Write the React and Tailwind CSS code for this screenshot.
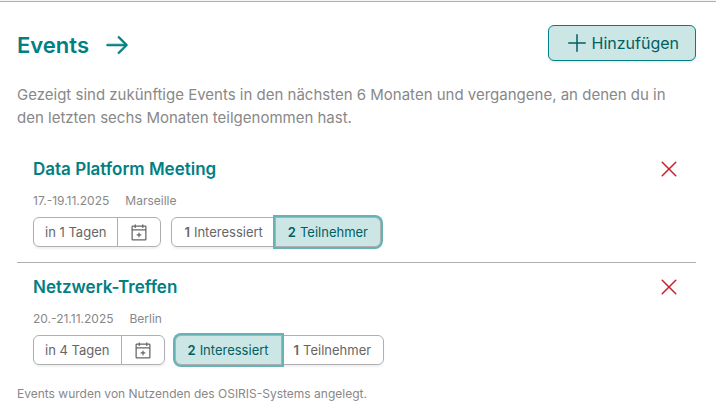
import { useState } from 'react';
import clsx from 'clsx';
import { PiArrowRight, PiCalendarPlus, PiPlus, PiX } from 'react-icons/pi';

const initialEvents = [
    { id: 1, title: 'Data Platform Meeting', date: '17.-19.11.2025', place: 'Marseille', due: 'in 1 Tagen', interested: 1, attending: 2, status: 'attending' },
    { id: 2, title: 'Netzwerk-Treffen', date: '20.-21.11.2025', place: 'Berlin', due: 'in 4 Tagen', interested: 2, attending: 1, status: 'interested' },
];

const groupCls = 'flex h-[30px] rounded-md shadow-[0_2px_2px_rgba(0,0,0,0.06)]';
const btnCls = 'flex items-center border border-[#afafaf] pt-px cursor-pointer';
const activeCls = 'relative border-[#008083] bg-[#cce6e6] text-[#005f61] ring-2 ring-[#66b3b5]';

function EventItem({ event, onStatus, onRemove }) {
    return (
        <li className="flex items-start justify-between border-b border-[#afafaf] pt-3 pr-[15px] pb-[15px] pl-4 last:border-b-0">
            <div>
                <h3 className="text-[17px] leading-6 font-semibold text-[#008083]">
                    <a href={`#event-${event.id}`}>{event.title}</a>
                </h3>
                <div className="mt-2.5 flex gap-4 text-xs leading-5">
                    <span>{event.date}</span>
                    <span>{event.place}</span>
                </div>
                <div className="mt-1.5 flex gap-2.5 text-[13px] text-[#666]">
                    <div className={groupCls}>
                        <span className="flex items-center rounded-l-md border border-[#afafaf] px-[11px] pt-px">{event.due}</span>
                        <button type="button" aria-label="Zum Kalender hinzufügen" className={clsx(btnCls, '-ml-px rounded-r-md px-[11px]')}>
                            <PiCalendarPlus className="size-5" />
                        </button>
                    </div>
                    <div className={groupCls}>
                        <button type="button" onClick={() => onStatus(event.id, 'interested')}
                            className={clsx(btnCls, 'gap-1 rounded-l-md px-3', event.status === 'interested' && activeCls)}>
                            <b className="font-semibold">{event.interested}</b> Interessiert
                        </button>
                        <button type="button" onClick={() => onStatus(event.id, 'attending')}
                            className={clsx(btnCls, '-ml-px gap-1 rounded-r-md px-3', event.status === 'attending' && activeCls)}>
                            <b className="font-semibold">{event.attending}</b> Teilnehmer
                        </button>
                    </div>
                </div>
            </div>
            <button type="button" aria-label="Entfernen" onClick={() => onRemove(event.id)} className="cursor-pointer text-[#c8202f]">
                <PiX className="size-6" />
            </button>
        </li>
    );
}

export default function App() {
    const [events, setEvents] = useState(initialEvents);

    const setStatus = (id, status) => setEvents(list => list.map(e => (e.id === id ? { ...e, status } : e)));
    const remove = (id) => setEvents(list => list.filter(e => e.id !== id));

    return (
        <div className="bg-[#f5f5f5] pt-px font-['Inter',sans-serif] text-[#888]">
            <section className="border-t border-[#afafaf] bg-white pt-[23px] pr-5 pb-3 pl-[17px]">
                <div className="flex items-center justify-between">
                    <h2 className="pt-1 text-[22px] leading-8 font-semibold text-[#008083]">
                        <a href="#events" className="flex items-center gap-3.5">
                            Events <PiArrowRight strokeWidth={6} className="size-7" />
                        </a>
                    </h2>
                    <button type="button"
                        className="flex h-9 cursor-pointer items-center gap-[3px] rounded-md border border-[#008083] bg-[#cce6e6] px-4 text-base text-[#005f61] shadow-[0_2px_2px_rgba(0,0,0,0.06)]">
                        <PiPlus className="size-6" /> Hinzufügen
                    </button>
                </div>

                <p className="mt-[22px] text-[15px] leading-[23px]">
                    Gezeigt sind zukünftige Events in den nächsten 6 Monaten und vergangene, an denen du in den letzten sechs Monaten teilgenommen hast.
                </p>

                <ul className="mt-4">
                    {events.map(event => (
                        <EventItem key={event.id} event={event} onStatus={setStatus} onRemove={remove} />
                    ))}
                </ul>

                <p className="mt-1 text-xs leading-5">Events wurden von Nutzenden des OSIRIS-Systems angelegt.</p>
            </section>
        </div>
    );
}
